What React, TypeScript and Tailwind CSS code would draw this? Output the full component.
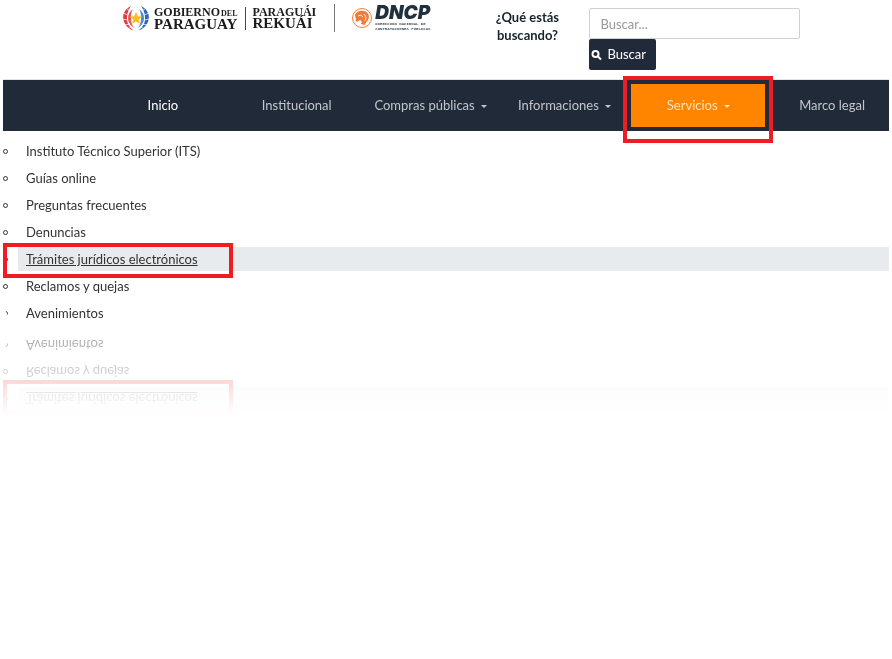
const menu = [
  { label: "Inicio", active: true },
  { label: "Institucional" },
  { label: "Compras públicas", dropdown: true },
  { label: "Informaciones", dropdown: true },
  { label: "Servicios", dropdown: true, open: true },
  { label: "Marco legal" },
];

const services = [
  "Instituto Técnico Superior (ITS)",
  "Guías online",
  "Preguntas frecuentes",
  "Denuncias",
  "Trámites jurídicos electrónicos",
  "Reclamos y quejas",
  "Avenimientos",
];

const current = "Trámites jurídicos electrónicos";

function Caret() {
  return (
    <span className="mt-0.5 ml-1.5 inline-block border-x-[3px] border-t-[3px] border-x-transparent border-t-current" />
  );
}

function GovernmentLogo() {
  return (
    <a href="#gobierno" className="flex items-center font-['Liberation_Serif',serif] font-bold text-[#1c1c1c]">
      <svg viewBox="0 0 28 28" className="mr-1 h-7 w-7" fill="none" aria-hidden="true">
        <path d="M9 2C3 5 0 10 1.500 16c1 5 5 9 10 10.500C7 23 5 19 5 15c0-5 1-9 4-13z" fill="#dd3f45" />
        <path d="M11 5c-3 2-5 5-5 9 0 5 3 8 6 10-2-3-3-6-3-9 0-4 0-7 2-10z" fill="#e8575b" />
        <path d="M1 9l5 2M0 15l6 1M2 21l6-1M6 25l4-3M4 4l4 3" stroke="#fff" strokeWidth=".7" />
        <path d="M19 2c6 3 9 8 7.500 14-1 5-5 9-10 10.500C21 23 23 19 23 15c0-5-1-9-4-13z" fill="#2f66bd" />
        <path d="M17 5c3 2 5 5 5 9 0 5-3 8-6 10 2-3 3-6 3-9 0-4 0-7-2-10z" fill="#5289d8" />
        <path d="M27 9l-5 2M28 15l-6 1M26 21l-6-1M22 25l-4-3M24 4l-4 3" stroke="#fff" strokeWidth=".7" />
        <path d="m14 8 1.800 4.200 4.400.3-3.400 2.900 1.100 4.400L14 17.500l-3.900 2.300 1.100-4.400-3.400-2.900 4.400-.3z" fill="#f8bf22" />
      </svg>
      <span className="flex flex-col border-r border-[#444] pr-2">
        <span className="text-xs leading-[11px]">
          GOBIERNO <span className="-ml-0.5 text-[8px]">DEL</span>
        </span>
        <span className="text-[15px] leading-[11px]">PARAGUAY</span>
      </span>
      <span className="flex flex-col pl-1.5">
        <span className="text-xs leading-[11px]">PARAGUÁI</span>
        <span className="text-[15px] leading-[11px]">REKUÁI</span>
      </span>
    </a>
  );
}

function DncpLogo() {
  return (
    <a href="#dncp" className="flex items-center text-[#20303c]">
      <svg viewBox="0 0 22 22" className="mr-0.5 h-[22px] w-[22px]" fill="none" aria-hidden="true">
        <circle cx="11" cy="11" r="9.500" stroke="#ee7d3b" />
        <path d="M4 9c0-4 5-6 9-5 5 1 6 6 4 9-1 2-3 3-3 5l-4-1c1-2 1-3-1-4l-3 2c-1-1-2-2-1-3z" fill="#ee7d3b" />
        <path d="M7 9l3-1 2 2M13 7l2 3-1 4" stroke="#fff" strokeWidth=".8" />
      </svg>
      <span className="flex flex-col">
        <span className="font-['Inter',sans-serif] text-[19px] leading-[18px] font-black italic">DNCP</span>
        <span className="font-['Liberation_Mono',monospace] text-[4px] leading-[5px] font-bold text-[#4a5560]">
          DIRECCIÓN NACIONAL DE
          <br />
          CONTRATACIONES PÚBLICAS
        </span>
      </span>
    </a>
  );
}

function SearchForm() {
  return (
    <form className="flex gap-6 pt-2" onSubmit={(e) => e.preventDefault()}>
      <label htmlFor="search" className="w-[76px] text-center leading-[18px] font-bold text-[#13232e]">
        ¿Qué estás buscando?
      </label>
      <div className="flex flex-col items-start">
        <input
          id="search"
          type="text"
          placeholder="Buscar..."
          className="h-[31px] w-[211px] rounded-xs border border-[#d0d0d0] px-2.5 placeholder:text-[#999]"
        />
        <button type="submit" className="flex h-[31px] items-center gap-1 rounded-xs bg-[#202a38] pr-2.5 pl-0.5 text-white">
          <svg viewBox="0 0 12 12" className="h-3 w-3" fill="none" stroke="currentColor" strokeWidth="2" aria-hidden="true">
            <circle cx="4.500" cy="5" r="3" />
            <path d="m7 7.500 3 3" />
          </svg>
          Buscar
        </button>
      </div>
    </form>
  );
}

function Highlight({ className }: { className: string }) {
  return <span className={`pointer-events-none absolute border-4 border-[#ee1c24] ${className}`} />;
}

export default function App() {
  return (
    <div className="min-h-screen bg-white px-[3px] font-['Lato',sans-serif] text-[13px]">
      <div className="overflow-hidden rounded-[30px] bg-white [-webkit-box-reflect:below_0px_linear-gradient(transparent_74%,rgba(0,0,0,0.45))]">
        <header className="flex h-20 items-start border-b border-[#e3e6e9] pl-[119px]">
          <div className="flex items-center pt-1">
            <GovernmentLogo />
            <span className="mr-4 ml-[18px] h-7 w-px bg-[#777]" />
            <DncpLogo />
          </div>
          <div className="ml-[59px]">
            <SearchForm />
          </div>
        </header>

        <nav className="bg-[#202a38] pl-[93px]">
          <ul className="-mr-2.5 grid grid-cols-6">
            {menu.map((item) => (
              <li key={item.label} className="relative py-1">
                <a
                  href="#menu"
                  className={`flex h-[43px] items-center justify-center whitespace-nowrap ${
                    item.open ? "bg-[#ff8400] text-[#ffe0bd]" : item.active ? "text-white" : "text-[#c3c6ca]"
                  }`}
                >
                  {item.label}
                  {item.dropdown && <Caret />}
                </a>
                {item.open && <Highlight className="-inset-x-2 -top-1 -bottom-3" />}
              </li>
            ))}
          </ul>
        </nav>

        <ul className="flex flex-col gap-[3px] pt-2 pb-1">
          {services.map((name) => (
            <li key={name} className="relative flex items-center">
              <span className="mr-2.5 h-[5px] w-[5px] rounded-full border border-[#333]" />
              <a
                href="#servicio"
                className={`h-6 flex-1 pl-2 leading-6 text-[#333] ${name === current ? "bg-[#e7ebee] underline" : ""}`}
              >
                {name}
              </a>
              {name === current && <Highlight className="-top-1 -bottom-[7px] left-0 w-[230px]" />}
            </li>
          ))}
        </ul>
      </div>
    </div>
  );
}
